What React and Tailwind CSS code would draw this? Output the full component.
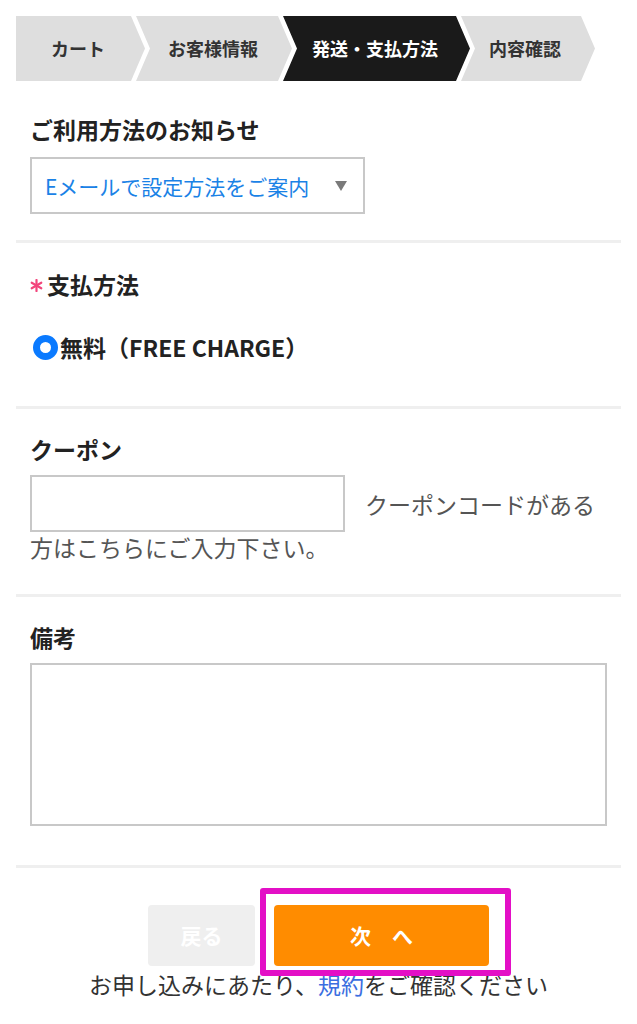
import React from "react";

const font = { fontFamily: '"Noto Sans CJK JP", "Noto Sans", sans-serif' };

function Step({ label, active, first, w, pr }) {
  const shape = first
    ? "[clip-path:polygon(0_0,calc(100%-14px)_0,100%_50%,calc(100%-14px)_100%,0_100%)]"
    : "[clip-path:polygon(0_0,calc(100%-14px)_0,100%_50%,calc(100%-14px)_100%,0_100%,14px_50%)]";
  return (
    <div
      className={`${shape} ${w} ${pr} ${first ? "" : "-ml-[9px]"} h-[65px] flex items-center justify-center shrink-0 text-[18px] font-bold ${
        active ? "bg-[#1a1a1a] text-white" : "bg-[#dedede] text-[#333]"
      }`}
    >
      {label}
    </div>
  );
}

function Divider({ mt }) {
  return <div className={`${mt} h-[3px] bg-[#efefef]`} />;
}

export default function App() {
  return (
    <div style={font} className="bg-white w-[637px] min-h-[1024px] text-[#222] overflow-hidden">
      <div className="px-4 pt-4">
        <div className="flex">
          <Step label="カート" first w="w-[129px]" pr="pr-[5px]" />
          <Step label="お客様情報" w="w-[156px]" pr="pr-[2px]" />
          <Step label="発送・支払方法" active w="w-[187px]" pr="pr-[3px]" />
          <Step label="内容確認" w="w-[134px]" pr="pr-[6px]" />
        </div>

        <div className="px-[14px]">
          <h2 className="mt-[33px] text-[23px] leading-[30px] font-bold">ご利用方法のお知らせ</h2>
          <div className="mt-[13px] w-[335px] h-[57px] border-2 border-[#c8c8c8] flex items-center justify-between pl-[13px] pr-[16px]">
            <span className="text-[21px] text-[#1a82e6] leading-[30px]">Eメールで設定方法をご案内</span>
            <svg width="12" height="10" viewBox="0 0 12 10">
              <polygon points="0,0 12,0 6,10" fill="#7a7a7a" />
            </svg>
          </div>
        </div>
        <Divider mt="mt-[26px]" />

        <div className="px-[14px]">
          <h2 className="mt-[26px] h-[30px] text-[23px] leading-[30px] font-bold flex items-center">
            <svg width="13" height="13" viewBox="0 0 13 13" className="mr-[4px] mt-[3px] shrink-0">
              <g stroke="#f2457c" strokeWidth="2.2" strokeLinecap="round">
                <line x1="6.5" y1="1" x2="6.5" y2="12" />
                <line x1="1.7" y1="3.75" x2="11.3" y2="9.25" />
                <line x1="1.7" y1="9.25" x2="11.3" y2="3.75" />
              </g>
            </svg>
            支払方法
          </h2>
          <div className="mt-[33px] h-[30px] flex items-center">
            <span className="ml-[3px] w-[25px] h-[25px] rounded-full border-[7px] border-[#0a7aff] bg-white shrink-0" />
            <span className="ml-[2px] text-[23px] leading-[30px] font-bold">無料（FREE CHARGE）</span>
          </div>
        </div>
        <Divider mt="mt-[44px]" />

        <div className="px-[14px]">
          <h2 className="mt-[25px] text-[23px] leading-[30px] font-bold">クーポン</h2>
          <div className="mt-[11px] text-[23px] leading-[30px] text-[#555]">
            <input
              type="text"
              className="inline-block align-middle w-[315px] h-[57px] border-2 border-[#c8c8c8] bg-white outline-none"
            />
            <span className="ml-[20px] align-middle">クーポンコードがある</span>
            方はこちらにご入力下さい。
          </div>
        </div>
        <Divider mt="mt-[32px]" />

        <div className="px-[14px]">
          <h2 className="mt-[25px] text-[23px] leading-[30px] font-bold">備考</h2>
          <textarea className="mt-[11px] block w-full h-[163px] border-2 border-[#c8c8c8] bg-white outline-none resize-none" />
        </div>
        <Divider mt="mt-[39px]" />

        <div className="mt-[37px] flex justify-center gap-[19px]">
          <button className="w-[107px] h-[61px] rounded-[4px] bg-[#efefef] text-white text-[21px] font-bold">
            戻る
          </button>
          <div className="relative">
            <button className="w-[215px] h-[61px] rounded-[4px] bg-[#ff8c00] text-white text-[21px] font-bold">
              次　へ
            </button>
            <div className="absolute -left-[14px] -top-[17px] -right-[22px] -bottom-[10px] border-[6px] border-[#e30fc6] rounded-[3px] pointer-events-none" />
          </div>
        </div>
        <p className="mt-[3px] text-center text-[23px] leading-[30px] text-[#333]">
          お申し込みにあたり、<span className="text-[#3b6ee0]">規約</span>をご確認ください
        </p>
      </div>
    </div>
  );
}
